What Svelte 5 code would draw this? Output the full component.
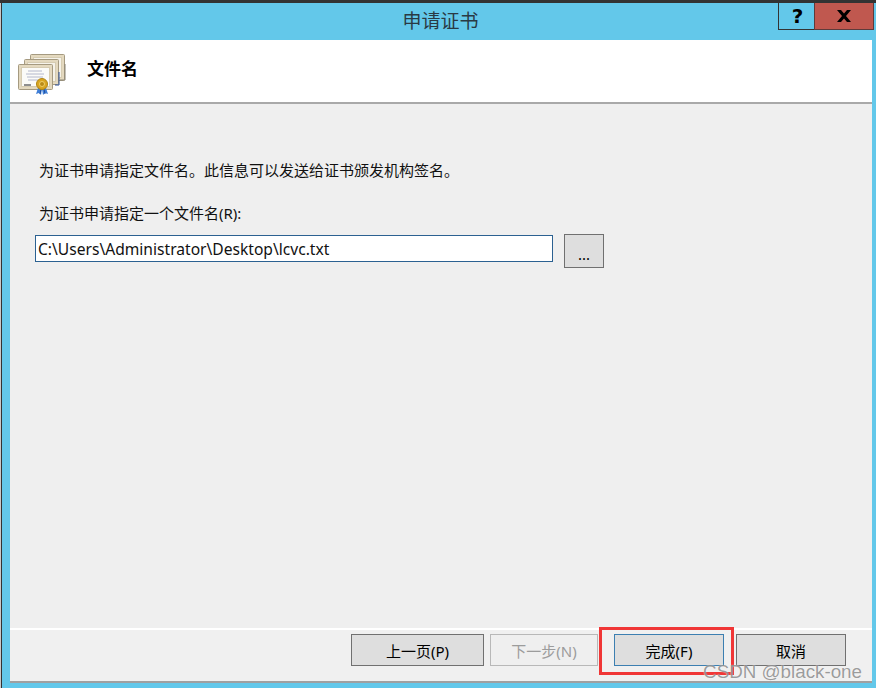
<script lang="ts">
  const buttons = [
    { label: "上一页(P)", kind: "" },
    { label: "下一步(N)", kind: "disabled" },
    { label: "完成(F)", kind: "primary" },
    { label: "取消", kind: "" }
  ];
</script>

<div class="window">
  <div class="titlebar">
    <span class="title">申请证书</span>
    <div class="controls">
      <span class="help">?</span>
      <span class="close">
        <svg width="14" height="12" viewBox="0 0 14 12"><path d="M0 0h4l3 3.500 3-3.500h4l-5 6 5 6h-4l-3-3.500-3 3.500H0l5-6z" fill="#000" /></svg>
      </span>
    </div>
  </div>
  <div class="dialog">
    <header>
      <svg class="cert" width="50" height="48" viewBox="0 0 50 48">
        <rect x="14.500" y="4.500" width="34" height="26" rx="1" fill="#e4d9bf" stroke="#a59a80" />
        <rect x="17.500" y="7.500" width="28" height="20" fill="#f6f3ea" stroke="#d6ccb2" />
        <path d="M49 14v16H44" fill="none" stroke="#8a8474" />
        <rect x="8.500" y="9.500" width="34" height="25" rx="1" fill="#e4d9bf" stroke="#a59a80" />
        <rect x="11.500" y="12.500" width="28" height="19" fill="#f6f3ea" stroke="#d6ccb2" />
        <path d="M43 22v13h-4" fill="none" stroke="#2a4f96" />
        <rect x="2.500" y="14.500" width="34" height="25" rx="1" fill="#e4d9bf" stroke="#a59a80" />
        <rect x="5.500" y="17.500" width="28" height="19" fill="#fbfbf8" stroke="#d6ccb2" />
        <path d="M12 21h14M10 24h18M11 27h16M12 30h10" stroke="#b4b8cc" />
        <path d="M8 35h7" stroke="#8f8f8f" stroke-width="2" />
        <path d="M22 38l-2 6 3-1 2 2 1-6 1 6 2-2 3 1-2-6z" fill="#3f7fd8" />
        <path d="M25 39l-1 5M28 39l1 5" stroke="#1f4f9e" />
        <circle cx="26" cy="34" r="5.500" fill="#d9a520" stroke="#b08412" />
        <circle cx="26" cy="34" r="2.500" fill="#b98a16" stroke="#efcf66" />
      </svg>
      <h1>文件名</h1>
    </header>
    <main>
      <p class="intro">为证书申请指定文件名。此信息可以发送给证书颁发机构签名。</p>
      <label for="path">为证书申请指定一个文件名(R):</label>
      <div class="field">
        <input id="path" value="C:\Users\Administrator\Desktop\lcvc.txt" />
        <button class="browse" type="button">...</button>
      </div>
    </main>
    <footer>
      {#each buttons as b}
        <button type="button" class={b.kind} class:marked={b.kind === "primary"}>{b.label}</button>
      {/each}
    </footer>
  </div>
  <span class="watermark">CSDN @black-one</span>
</div>

<style>
  :global(body) {
    margin: 0;
    background: #63c8ea;
  }

  .window {
    position: relative;
    box-sizing: border-box;
    width: 876px;
    height: 688px;
    overflow: hidden;
    display: flex;
    flex-direction: column;
    padding: 0 4px 5px 2px;
    background: #63c8ea;
    border-top: 3px solid #333;
    font-family: "Noto Sans", "Noto Sans CJK SC", sans-serif;
    color: #000;
  }

  .window::before {
    content: "";
    position: absolute;
    left: 0;
    top: 0;
    bottom: 0;
    width: 2px;
    box-sizing: border-box;
    background: #333;
    border-left: 1px solid #c9c9c9;
  }

  .titlebar {
    position: relative;
    height: 37px;
    flex: none;
    display: flex;
    justify-content: center;
  }

  .title {
    font-size: 19px;
    line-height: 37px;
    color: #2a3a44;
    margin-left: 7px;
  }

  .controls {
    position: absolute;
    right: -2px;
    top: 0;
    display: flex;
    height: 27px;
  }

  .help,
  .close {
    box-sizing: border-box;
    height: 27px;
    display: flex;
    align-items: center;
    justify-content: center;
    border: 1px solid #333;
    border-top: 0;
  }

  .help {
    width: 36px;
    padding-left: 2px;
    border-right: 0;
    font: bold 20px/1 "DejaVu Sans", sans-serif;
  }

  .close {
    width: 60px;
    padding-right: 1px;
    background: #c0584f;
    border-color: #5e3b3b;
  }

  .dialog {
    flex: 1;
    margin-left: 8px;
    display: flex;
    flex-direction: column;
    background: #efefef;
    border-bottom: 2px solid #a0a0a0;
    min-height: 0;
  }

  header {
    height: 62px;
    flex: none;
    display: flex;
    align-items: center;
    background: #fff;
    border-bottom: 2px solid #a9a9a9;
    padding-left: 6px;
  }

  .cert {
    flex: none;
    margin-top: 6px;
  }

  h1 {
    margin: 0 0 8px 21px;
    font-size: 17px;
    font-weight: bold;
  }

  main {
    flex: 1;
    padding: 56px 0 0 25px;
    font-size: 15px;
    color: #111;
  }

  .intro {
    margin: 0 0 23px 4px;
    line-height: 20px;
  }

  label {
    display: block;
    margin-left: 4px;
    line-height: 20px;
  }

  .field {
    display: flex;
    align-items: flex-start;
    gap: 11px;
    margin-top: 11px;
  }

  input {
    box-sizing: border-box;
    width: 518px;
    height: 27px;
    margin: 1px 0 0;
    padding: 0 2px;
    border: 1px solid #2b6191;
    border-radius: 0;
    outline: 0;
    background: #fff;
    color: #111;
    font: 15.6px "Noto Sans", sans-serif;
  }

  button {
    box-sizing: border-box;
    margin: 0;
    padding: 0;
    border: 1px solid #707070;
    border-radius: 0;
    background: #dedede;
    color: #000;
    font: 15px "Noto Sans", "Noto Sans CJK SC", sans-serif;
  }

  .browse {
    width: 40px;
    height: 34px;
    padding-top: 6px;
  }

  footer {
    flex: none;
    height: 53px;
    box-sizing: border-box;
    border-top: 2px solid #fff;
    display: flex;
    justify-content: flex-end;
    padding: 4px 26px 0 0;
    background: #f0f0f0;
  }

  footer button {
    width: 110px;
    height: 32px;
  }

  footer button:first-child {
    width: 133px;
    margin-right: 6px;
  }

  footer button.disabled {
    width: 108px;
    border-color: #b8b8b8;
    background: #efefef;
    color: #9c9c9c;
  }

  footer button.primary {
    border-color: #3c7fb1;
    margin: 0 12px 0 16px;
  }

  /* red annotation box drawn over the screenshot */
  .marked {
    position: relative;
  }

  .marked::after {
    content: "";
    position: absolute;
    inset: -8px -11px -10px -16px;
    border: 3px solid #f03636;
  }

  .watermark {
    position: absolute;
    right: 14px;
    bottom: 5px;
    font: 18.800px "Liberation Sans", sans-serif;
    color: rgba(90, 90, 90, 0.6);
    text-shadow: 0 0 1px rgba(255, 255, 255, 0.9);
  }
</style>
